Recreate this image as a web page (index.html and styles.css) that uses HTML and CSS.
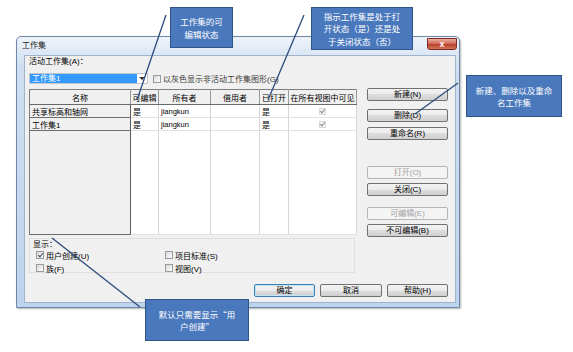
FILE: index.html
```html
<!DOCTYPE html>
<html>
<head>
    <title>工作集</title>
    <link rel="stylesheet" href="styles.css">
</head>
<body>
<div class="stage">

    <div class="window">
        <div class="titlebar">
            <span class="title">工作集</span>
            <span class="close">x</span>
        </div>
        <div class="client">
            <div class="main">
                <div class="left">
                    <div class="lbl">活动工作集(A)：</div>
                    <div class="combo-row">
                        <div class="combo">
                            <span class="combo-sel">工作集1</span>
                            <span class="combo-arrow"></span>
                        </div>
                        <div class="chk muted"><span class="box"></span>以灰色显示非活动工作集图形(G)</div>
                    </div>

                    <table class="grid">
                        <colgroup>
                            <col style="width:101px"><col style="width:28px"><col style="width:52px">
                            <col style="width:49px"><col style="width:29px"><col style="width:68px">
                        </colgroup>
                        <tr class="head">
                            <th>名称</th><th>可编辑</th><th>所有者</th><th>借用者</th><th>已打开</th><th>在所有视图中可见</th>
                        </tr>
                        <tr class="row">
                            <td class="name">共享标高和轴网</td><td>是</td><td class="latin">jiangkun</td><td></td><td>是</td><td class="vis"><span class="tick"></span></td>
                        </tr>
                        <tr class="row">
                            <td class="name">工作集1</td><td>是</td><td class="latin">jiangkun</td><td></td><td>是</td><td class="vis"><span class="tick"></span></td>
                        </tr>
                        <tr class="fill">
                            <td class="name"></td><td></td><td></td><td></td><td></td><td></td>
                        </tr>
                    </table>

                    <div class="group">
                        <div class="group-title">显示：</div>
                        <div class="opts">
                            <div class="chk"><span class="box on"></span>用户创建(U)</div>
                            <div class="chk"><span class="box"></span>项目标准(S)</div>
                            <div class="chk"><span class="box"></span>族(F)</div>
                            <div class="chk"><span class="box"></span>视图(V)</div>
                        </div>
                    </div>
                </div>

                <div class="side">
                    <div class="btn">新建(N)</div>
                    <div class="btn mt8">删除(D)</div>
                    <div class="btn mt5">重命名(R)</div>
                    <div class="btn off mt26">打开(O)</div>
                    <div class="btn mt4">关闭(C)</div>
                    <div class="btn off mt11">可编辑(E)</div>
                    <div class="btn mt4">不可编辑(B)</div>
                </div>
            </div>

            <div class="footer">
                <div class="btn default w61">确定</div>
                <div class="btn w62">取消</div>
                <div class="btn w61">帮助(H)</div>
            </div>
        </div>
    </div>

    <!-- 引线 -->
    <svg class="leaders" width="573" height="352" viewBox="0 0 573 352">
        <line x1="166" y1="15" x2="137" y2="100" />
        <line x1="304" y1="15" x2="268" y2="100" />
        <line x1="458" y1="83" x2="415" y2="114" />
        <line x1="52" y1="238" x2="140" y2="307" />
    </svg>

    <div class="callout c1">工作集的可<br>编辑状态</div>
    <div class="callout c2">指示工作集是处于打<br>开状态（是）还是处<br>于关闭状态（否）</div>
    <div class="callout c3">新建、删除以及重命<br>名工作集</div>
    <div class="callout c4">默认只需要显示“用<br>户创建”</div>

</div>
</body>
</html>
```

FILE: styles.css
```css
body {
    margin: 0;
    font-family: "Liberation Sans", "Noto Sans CJK SC", sans-serif;
    font-size: 8px;
    color: #000;
}

.stage {
    position: relative;
    width: 573px;
    height: 352px;
    padding: 36px 0 0 16px;
    box-sizing: border-box;
    background: #fff;
    overflow: hidden;
}

/* 窗口外框 */
.window {
    width: 444px;
    height: 272px;
    box-sizing: border-box;
    border: 1px solid #6f87a6;
    border-radius: 5px 5px 0 0;
    background: linear-gradient(#eef3fa, #cfdff1 30px, #bed3ec);
    box-shadow: 1px 1px 2px rgba(0, 0, 0, .3);
    display: flex;
    flex-direction: column;
}

.titlebar {
    height: 18px;
    display: flex;
    justify-content: space-between;
    align-items: flex-start;
    padding-left: 5px;
}

.title {
    line-height: 18px;
    color: #1a1a1a;
}

.close {
    width: 30px;
    height: 12px;
    margin: 1px 2px 0 0;
    box-sizing: border-box;
    border: 1px solid #7d2b22;
    border-radius: 0 0 3px 3px;
    background: linear-gradient(#eab0a2, #d06b57 45%, #b9412d 55%, #d27258);
    color: #fff;
    font: bold 9px/10px "Liberation Sans", sans-serif;
    text-align: center;
}

/* 客户区 */
.client {
    width: 432px;
    height: 248px;
    margin: 0 3px 4px 7px;
    box-sizing: border-box;
    border: 1px solid #9fb4cc;
    background: #f0f0f0;
    padding-left: 4px;
    display: flex;
    flex-direction: column;
}

.main {
    display: flex;
    height: 217px;
}

.left {
    width: 327px;
}

.lbl {
    height: 12px;
    line-height: 12px;
}

.combo-row {
    margin-top: 5px;
    height: 11px;
    display: flex;
    align-items: center;
}

.combo {
    width: 119px;
    height: 11px;
    box-sizing: border-box;
    border: 1px solid #c3c6cb;
    background: #fff;
    display: flex;
}

.combo-sel {
    flex: 1;
    background: #3399ff;
    color: #fff;
    line-height: 9px;
    padding-left: 2px;
}

.combo-arrow {
    width: 10px;
    position: relative;
}

.combo-arrow:after {
    content: '';
    position: absolute;
    left: 2px;
    top: 3px;
    border-left: 3px solid transparent;
    border-right: 3px solid transparent;
    border-top: 3px solid #333;
}

/* 复选框 */
.chk {
    display: flex;
    align-items: center;
    gap: 2px;
    height: 10px;
    white-space: nowrap;
}

.combo-row .chk {
    margin-left: 5px;
}

.muted {
    color: #3a3a3a;
}

.box {
    width: 8px;
    height: 8px;
    box-sizing: border-box;
    border: 1px solid #9a9b9c;
    background: linear-gradient(135deg, #d9d9d9, #fdfdfd);
    position: relative;
}

.box.on:after {
    content: '';
    position: absolute;
    left: 2px;
    top: 0;
    width: 2px;
    height: 4px;
    border-right: 1px solid #3c4a72;
    border-bottom: 1px solid #3c4a72;
    transform: rotate(40deg);
}

/* 列表 */
.grid {
    margin-top: 5px;
    width: 327px;
    height: 146px;
    table-layout: fixed;
    border-collapse: collapse;
    border: 1px solid #7d7d7d;
}

.grid th {
    height: 14px;
    padding: 0;
    font-weight: normal;
    background: #f0f0f0;
    border-right: 1px solid #9a9a9a;
    border-bottom: 1px solid #6a6a6a;
    white-space: nowrap;
    overflow: hidden;
}

.grid td {
    padding: 0 2px;
    background: #fff;
    border-right: 1px solid #d6d6d6;
    border-bottom: 1px solid #e2e2e2;
    white-space: nowrap;
    overflow: hidden;
}

.grid .row td {
    height: 12px;
}

.grid td.name {
    background: #f0f0f0;
    border-right: 1px solid #5c5c5c;
    border-bottom: 1px solid #6c6c6c;
}

.grid td.latin {
    font-size: 7.5px;
}

.grid td.vis {
    text-align: center;
}

.tick {
    display: inline-block;
    width: 7px;
    height: 7px;
    box-sizing: border-box;
    border: 1px solid #dadada;
    background: #f2f2f2;
    position: relative;
    vertical-align: middle;
}

.tick:after {
    content: '';
    position: absolute;
    left: 1px;
    top: -1px;
    width: 2px;
    height: 4px;
    border-right: 1px solid #8a8f9c;
    border-bottom: 1px solid #8a8f9c;
    transform: rotate(40deg);
}

/* 显示 分组 */
.group {
    margin-top: 3px;
    width: 326px;
    height: 35px;
    box-sizing: border-box;
    border: 1px solid #e0e0e0;
    padding-left: 3px;
}

.group-title {
    height: 10px;
    line-height: 10px;
    margin-top: 1px;
}

.opts {
    display: grid;
    grid-template-columns: 129px auto;
    row-gap: 3px;
    padding-left: 3px;
}

/* 按钮 */
.side {
    width: 81px;
    margin-left: 11px;
    padding-top: 32px;
    display: flex;
    flex-direction: column;
}

.btn {
    height: 13px;
    box-sizing: border-box;
    border: 1px solid #707070;
    border-radius: 2px;
    background: linear-gradient(#f3f3f3, #ebebeb 50%, #dddddd 50%, #d0d0d0);
    line-height: 11px;
    text-align: center;
    white-space: nowrap;
}

.btn.off {
    border-color: #b2b6b9;
    background: #f4f4f4;
    color: #a3a3a3;
}

.btn.default {
    border-color: #3c7fb1;
    box-shadow: inset 0 0 0 1px #bfe3f8;
}

.mt4 { margin-top: 4px; }
.mt5 { margin-top: 5px; }
.mt8 { margin-top: 8px; }
.mt11 { margin-top: 11px; }
.mt26 { margin-top: 26px; }

.w61 { width: 61px; }
.w62 { width: 62px; }

.footer {
    display: flex;
    justify-content: flex-end;
    gap: 5px;
    margin-top: 11px;
    padding-right: 7px;
}

/* 标注 */
.leaders {
    position: absolute;
    left: 0;
    top: 0;
}

.leaders line {
    stroke: #2c4c7c;
    stroke-width: 1.3;
}

.callout {
    position: absolute;
    box-sizing: border-box;
    background: #4a78bd;
    border: 1px solid #2f5489;
    color: #fff;
    font-family: "Noto Sans CJK SC", sans-serif;
    font-size: 8.5px;
    line-height: 12.5px;
    display: flex;
    align-items: center;
    justify-content: center;
    text-align: center;
}

.c1 { left: 170px; top: 7px; width: 63px; height: 41px; }
.c2 { left: 311px; top: 7px; width: 102px; height: 43px; }
.c3 { left: 466px; top: 75px; width: 96px; height: 42px; }
.c4 { left: 145px; top: 299px; width: 104px; height: 42px; }
```
